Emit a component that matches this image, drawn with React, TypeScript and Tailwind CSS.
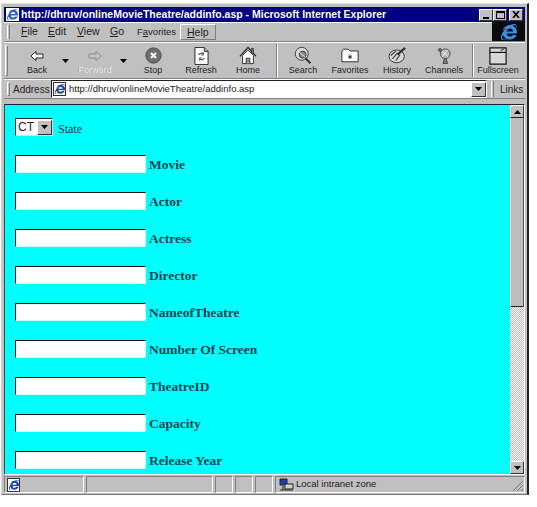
import React from 'react'
import { FaInternetExplorer } from 'react-icons/fa'

const fields = ['Movie', 'Actor', 'Actress', 'Director', 'NameofTheatre', 'Number Of Screen', 'TheatreID', 'Capacity', 'Release Year']

function Sep() {
  return <div className="w-[2px] h-[33px] self-center border-l border-l-[#808080] border-r border-r-white" />
}

function Grip() {
  return <div className="w-[3px] self-stretch my-[2px] border-l border-t border-white border-r border-r-[#808080] border-b border-b-[#808080]" />
}

function Caret({ down = true }: { down?: boolean }) {
  return (
    <svg width="7" height="4" viewBox="0 0 7 4" className={down ? '' : 'rotate-180'}>
      <path d="M0 0h7L3.5 4z" fill="#000" />
    </svg>
  )
}

function IeDoc() {
  return (
    <div className="relative w-[13px] h-[14px] bg-white border border-[#333] flex items-center justify-center shrink-0">
      <FaInternetExplorer size={10} color="#1d3fb0" />
    </div>
  )
}

function ToolBtn({ label, w, disabled, caret, icon }: { label: string; w: string; disabled?: boolean; caret?: boolean; icon: React.ReactNode }) {
  return (
    <div className={`${w} relative shrink-0 flex flex-col items-center pt-[2px]`}>
      <div className="h-[21px] flex items-center justify-center">{icon}</div>
      <span className={`-mt-[1px] text-[9px] leading-[11px] whitespace-nowrap ${disabled ? 'text-[#ececec] [text-shadow:-1px_0_#a0a0a0]' : 'text-[#222]'}`}>{label}</span>
      {caret && <div className="absolute -right-[3px] top-[16px] leading-none flex"><Caret /></div>}
    </div>
  )
}

const backIcon = (
  <svg width="14" height="10" viewBox="0 0 14 10">
    <path d="M6 .5.8 5 6 9.500V7h7V3H6z" fill="#fff" stroke="#222" />
  </svg>
)
const forwardIcon = (
  <svg width="14" height="10" viewBox="0 0 14 10">
    <path d="M8 .5 13.200 5 8 9.500V7H1V3h7z" fill="none" stroke="#8c8c8c" />
  </svg>
)
const stopIcon = (
  <svg width="17" height="17" viewBox="0 0 20 20">
    <circle cx="10" cy="10" r="9" fill="#6e6e70" stroke="#444" />
    <path d="M7 7l6 6M13 7l-6 6" stroke="#f4f4f4" strokeWidth="2.600" />
  </svg>
)
const refreshIcon = (
  <svg width="15" height="20" viewBox="0 0 16 20">
    <path d="M1 1h10l4 4v14H1z" fill="#fff" stroke="#222" />
    <path d="M11 1v4h4" fill="#c0c0c0" stroke="#222" />
    <path d="M5 9a3 3 0 0 1 5-1M11 12a3 3 0 0 1-5 1" fill="none" stroke="#555" strokeWidth="1.300" />
    <path d="M10 6v3H7.500M6 15v-3h2.500" fill="none" stroke="#555" />
  </svg>
)
const homeIcon = (
  <svg width="18" height="19" viewBox="0 0 20 20">
    <path d="M1 11 10 1l9 10" fill="none" stroke="#222" strokeWidth="1.400" />
    <path d="M14 2h2v5h-2z" fill="#777" stroke="#222" strokeWidth=".7" />
    <path d="M4 10v9h12v-9l-6-6z" fill="#fff" stroke="#222" />
    <path d="M8 19v-6h4v6" fill="#999" stroke="#222" />
  </svg>
)
const searchIcon = (
  <svg width="19" height="19" viewBox="0 0 22 22">
    <circle cx="9" cy="9" r="7.500" fill="#d8d8d8" stroke="#333" />
    <circle cx="10" cy="10" r="4" fill="#8a8a8a" stroke="#333" />
    <path d="M4 5l10 9" stroke="#fff" />
    <path d="M13 14l6 6" stroke="#333" strokeWidth="2.400" />
  </svg>
)
const favoritesIcon = (
  <svg width="18" height="15" viewBox="0 0 20 16">
    <path d="M1 15V3l2-2h5l2 2h9v12z" fill="#fff" stroke="#222" />
    <path d="M10 7v5M8 8.500l4 2M12 8.500l-4 2" stroke="#222" />
  </svg>
)
const historyIcon = (
  <svg width="19" height="17" viewBox="0 0 22 20">
    <ellipse cx="10" cy="11" rx="9" ry="7.500" fill="#d8d8d8" stroke="#222" />
    <path d="M3 10l6-5M5 14l6-7M9 16l5-7" stroke="#444" strokeWidth="1.400" />
    <path d="M11 9l9-8" stroke="#333" strokeWidth="2.600" />
  </svg>
)
const channelsIcon = (
  <svg width="15" height="18" viewBox="0 0 20 22">
    <circle cx="11" cy="8" r="6.500" fill="#b4b4b4" stroke="#333" />
    <path d="M6 4l9 8M14 3l-7 9" stroke="#fff" />
    <circle cx="4" cy="3" r="2" fill="#777" stroke="#333" />
    <path d="M10 14l-2 7h6l-2-7" fill="#777" stroke="#333" />
  </svg>
)
const fullscreenIcon = (
  <svg width="18" height="18" viewBox="0 0 20 20">
    <path d="M1 1h18v18H1z" fill="#d8d8d8" stroke="#111" strokeWidth="1.300" />
    <path d="M1 6h18" stroke="#111" strokeWidth="1.300" />
    <path d="M13 4l4-2" stroke="#111" />
  </svg>
)

export default function App() {
  return (
    <div className="w-[537px] h-[507px] bg-white font-['Liberation_Sans',sans-serif] overflow-hidden pt-[3px] pl-[1px]">
      <div className="w-[528px] h-[492px] bg-[#c0c0c0] border-r-2 border-r-[#222] border-b border-b-[#777] border-l border-l-[#d8d8d8] border-t border-t-[#e4e4e4] pt-[3px] px-[2px] flex flex-col">
        {/* title bar */}
        <div className="h-[15px] bg-[#000080] flex items-center pl-[2px] pr-[2px] shrink-0">
          <div className="w-[13px] h-[13px] bg-white flex items-center justify-center"><FaInternetExplorer size={11} color="#2a5fd0" /></div>
          <span className="ml-[2px] text-[10.5px] font-bold text-white leading-none whitespace-nowrap">http://dhruv/onlineMovieTheatre/addinfo.asp - Microsoft Internet Explorer</span>
          <div className="ml-auto flex items-center">
            <div className="w-[14px] h-[12px] bg-[#c0c0c0] border border-white border-r-[#333] border-b-[#333] flex items-end justify-center pb-[1px]"><div className="w-[6px] h-[2px] bg-black" /></div>
            <div className="w-[14px] h-[12px] bg-[#c0c0c0] border border-white border-r-[#333] border-b-[#333] flex items-center justify-center"><div className="w-[9px] h-[8px] border border-black border-t-2" /></div>
            <div className="ml-[2px] w-[14px] h-[12px] bg-[#c0c0c0] border border-white border-r-[#333] border-b-[#333] flex items-center justify-center">
              <svg width="8" height="7" viewBox="0 0 8 7"><path d="M1 0l6 7M7 0L1 7" stroke="#000" strokeWidth="1.600" /></svg>
            </div>
          </div>
        </div>

        {/* menu */}
        <div className="h-[20px] flex items-stretch border-b border-b-[#808080] shrink-0">
          <div className="flex items-center pl-[3px] flex-1 border-t border-t-white">
            <div className="h-[14px] w-[3px] border-l border-l-white border-r border-r-[#808080] mr-[11px]" />
            <div className="flex items-center text-[10.5px] text-[#222]">
              <span className="w-[27px]"><span className="underline">F</span>ile</span>
              <span className="w-[29px]"><span className="underline">E</span>dit</span>
              <span className="w-[33px]"><span className="underline">V</span>iew</span>
              <span className="w-[27px]"><span className="underline">G</span>o</span>
              <span className="w-[43px] text-[9.5px] whitespace-nowrap">F<span className="underline">a</span>vorites</span>
              <span className="px-[6px] h-[16px] leading-[14px] border border-white border-r-[#808080] border-b-[#808080]"><span className="underline">H</span>elp</span>
            </div>
          </div>
          <div className="w-[33px] h-[19px] bg-[#0a0a0a] flex items-center justify-center">
            <FaInternetExplorer size={16} color="#3a8fe8" />
          </div>
        </div>

        {/* toolbar */}
        <div className="h-[37px] flex items-stretch border-t border-t-white border-b border-b-[#808080] shrink-0 pl-[1px]">
          <Grip />
          <ToolBtn label="Back" w="w-[58px]" caret icon={backIcon} />
          <ToolBtn label="Forward" w="w-[58px]" disabled caret icon={forwardIcon} />
          <ToolBtn label="Stop" w="w-[58px]" icon={stopIcon} />
          <ToolBtn label="Refresh" w="w-[38px]" icon={refreshIcon} />
          <ToolBtn label="Home" w="w-[56px]" icon={homeIcon} />
          <Sep />
          <ToolBtn label="Search" w="w-[50px]" icon={searchIcon} />
          <ToolBtn label="Favorites" w="w-[44px]" icon={favoritesIcon} />
          <ToolBtn label="History" w="w-[50px]" icon={historyIcon} />
          <ToolBtn label="Channels" w="w-[44px]" icon={channelsIcon} />
          <div className="ml-[6px] flex"><Sep /></div>
          <ToolBtn label="Fullscreen" w="w-[48px]" icon={fullscreenIcon} />
        </div>

        {/* address */}
        <div className="h-[20px] flex items-center border-t border-t-white border-b border-b-[#808080] shrink-0 pl-[3px]">
          <Grip />
          <span className="ml-[3px] text-[10px] text-[#222] w-[38px]">Address</span>
          <div className="w-[436px] h-[18px] bg-white border border-t-[#222] border-l-[#222] border-r-white border-b-white flex items-center pl-[1px]">
            <IeDoc />
            <span className="ml-[3px] text-[9.5px] text-[#222] whitespace-nowrap">http://dhruv/onlineMovieTheatre/addinfo.asp</span>
            <div className="ml-auto w-[15px] h-[15px] bg-[#c0c0c0] border border-white border-r-[#333] border-b-[#333] flex items-center justify-center"><Caret /></div>
          </div>
          <div className="ml-[4px] h-[16px] w-[3px] border-l border-l-white border-r border-r-[#808080]" />
          <span className="ml-[6px] text-[10px] text-[#222]">Links</span>
        </div>

        {/* page + scrollbar */}
        <div className="mt-[5px] h-[371px] flex border border-t-[#222] border-l-[#444] border-r-white border-b-white shrink-0">
          <div className="flex-1 bg-[#00ffff] overflow-hidden pl-[10px] pt-[13px]">
            <div className="flex items-center h-[18px]">
              <div className="w-[38px] h-[18px] bg-white border border-t-[#222] border-l-[#222] border-r-[#ddd] border-b-[#ddd] flex items-center justify-between">
                <span className="ml-[2px] text-[12px] text-[#222]">CT</span>
                <div className="w-[15px] h-[15px] bg-[#c0c0c0] border border-white border-r-[#333] border-b-[#333] flex items-center justify-center"><Caret /></div>
              </div>
              <span className="ml-[5px] pt-[3px] text-[12px] text-[#134] font-['Liberation_Serif',serif]">State</span>
            </div>
            <div className="mt-[19px] flex flex-col gap-[19px]">
              {fields.map(f => (
                <div key={f} className="flex items-center h-[18px]">
                  <div className="w-[131px] h-[18px] bg-white border border-t-[#111] border-l-[#111] border-r-[#cfe] border-b-[#cfe]" />
                  <span className="ml-[3px] pt-[3px] text-[13.500px] font-bold text-[#0f3f4f] font-['Liberation_Serif',serif] whitespace-nowrap">{f}</span>
                </div>
              ))}
            </div>
          </div>
          <div className="w-[14px] flex flex-col bg-[#d8d8d8] [background-image:repeating-conic-gradient(#f2f2f2_0_25%,#c0c0c0_0_50%)] [background-size:2px_2px]">
            <div className="h-[13px] bg-[#c0c0c0] border border-white border-r-[#333] border-b-[#222] flex items-center justify-center"><Caret down={false} /></div>
            <div className="h-[189px] bg-[#bcbcbc] border-r border-r-[#555] border-b border-b-[#222] border-l border-l-white" />
            <div className="mt-auto h-[13px] bg-[#c0c0c0] border border-white border-r-[#333] border-b-[#333] flex items-center justify-center"><Caret /></div>
          </div>
        </div>

        {/* status bar */}
        <div className="mt-[1px] h-[17px] flex items-stretch text-[9.5px] text-[#222] shrink-0">
          <div className="w-[80px] border border-t-[#808080] border-l-[#808080] border-r-white border-b-white flex items-center pl-[2px]"><IeDoc /></div>
          <div className="ml-[2px] w-[127px] border border-t-[#808080] border-l-[#808080] border-r-white border-b-white" />
          <div className="ml-[2px] w-[18px] border border-t-[#808080] border-l-[#808080] border-r-white border-b-white" />
          <div className="ml-[2px] w-[18px] border border-t-[#808080] border-l-[#808080] border-r-white border-b-white" />
          <div className="ml-[2px] w-[18px] border border-t-[#808080] border-l-[#808080] border-r-white border-b-white" />
          <div className="ml-[2px] flex-1 border border-t-[#808080] border-l-[#808080] border-r-white border-b-white flex items-center pl-[3px] relative">
            <svg width="15" height="14" viewBox="0 0 15 14">
              <path d="M1 1h7v6H1z" fill="#1d3fb0" stroke="#222" />
              <path d="M6 6h8v5H6z" fill="#bfe0bf" stroke="#222" />
              <path d="M1 12h13M4 8v4" stroke="#222" />
            </svg>
            <span className="ml-[2px] whitespace-nowrap">Local intranet zone</span>
            <svg width="12" height="12" viewBox="0 0 12 12" className="absolute right-0 bottom-0">
              <path d="M11 1 1 11M11 5l-6 6M11 9l-2 2" stroke="#777" />
            </svg>
          </div>
        </div>
      </div>
    </div>
  )
}
